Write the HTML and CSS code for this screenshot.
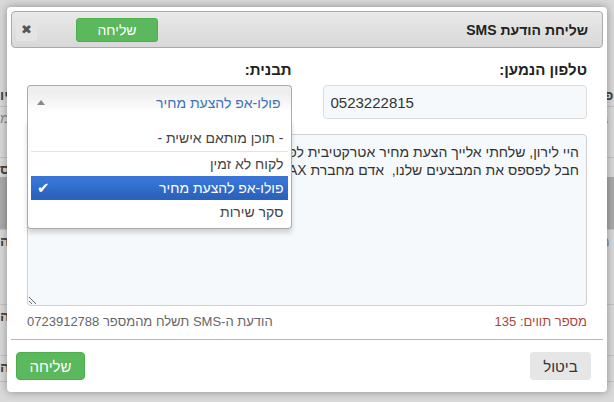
FILE: index.html
```html
<!DOCTYPE html>
<html lang="he" dir="rtl">
<head>
  <meta charset="UTF-8" />
  <title>שליחת הודעת SMS</title>
  <link rel="stylesheet" href="styles.css">
</head>
<body>
  <div class="backdrop">
    <div class="bg-row bg-head"><span class="bg-right">פו</span><span class="bg-left">יו</span></div>
    <div class="bg-row bg-tall"><span class="bg-right muted">ב</span><span class="bg-left muted">מ</span></div>
    <div class="bg-row bg-block"><span class="bg-right"></span><span class="bg-left">ס</span></div>
    <div class="bg-row bg-tall2"><span class="bg-right muted">מ</span><span class="bg-left">ה</span></div>
    <div class="bg-row bg-tall"><span class="bg-right"></span><span class="bg-left">ה</span></div>
    <div class="bg-row"><span class="bg-right"></span><span class="bg-left">ה</span></div>
  </div>

  <div class="dialog">
    <div class="titlebar">
      <span class="title">שליחת הודעת SMS</span>
      <div class="title-actions">
        <button class="btn btn-green btn-small">שליחה</button>
        <button class="close-btn" aria-label="סגירה">&#10006;</button>
      </div>
    </div>

    <div class="dialog-body">
      <div class="fields">
        <div class="field">
          <label for="phone">טלפון הנמען:</label>
          <input type="text" id="phone" class="text-input" value="0523222815" dir="ltr">
        </div>
        <div class="field">
          <label>תבנית:</label>
          <div class="chosen">
            <div class="chosen-single">
              <span>פולו-אפ להצעת מחיר</span>
              <b class="arrow"></b>
            </div>
            <div class="chosen-drop">
              <ul class="chosen-results">
                <li class="sep">- תוכן מותאם אישית -</li>
                <li>לקוח לא זמין</li>
                <li class="highlighted"><span>פולו-אפ להצעת מחיר</span><span class="check">&#10004;</span></li>
                <li>סקר שירות</li>
              </ul>
            </div>
          </div>
        </div>
      </div>

      <textarea class="message">היי לירון, שלחתי אלייך הצעת מחיר אטרקטיבית לפני כמה ימים, אשמח לשמוע ממך.
חבל לפספס את המבצעים שלנו,  אדם מחברת MAX</textarea>

      <div class="meta">
        <span class="count">מספר תווים: 135</span>
        <span class="sender">הודעת ה-SMS תשלח מהמספר 0723912788</span>
      </div>
    </div>

    <div class="dialog-footer">
      <button class="btn btn-grey">ביטול</button>
      <button class="btn btn-green">שליחה</button>
    </div>
  </div>
</body>
</html>
```

FILE: styles.css
```css
* {
  box-sizing: border-box;
  margin: 0;
  padding: 0;
}

body {
  font-family: "Liberation Sans", Arial, sans-serif;
  font-size: 14px;
  color: #333;
  background-color: #d9d9d9;
  height: 402px;
  overflow: hidden;
}

/* page behind the dialog */
.backdrop {
  padding-top: 84px;
}

.bg-row {
  display: flex;
  justify-content: space-between;
  align-items: flex-start;
  height: 26px;
  border-bottom: 1px solid #c2c2c2;
  padding-top: 3px;
  font-weight: bold;
  color: #444;
}

.bg-row .muted {
  font-weight: normal;
  color: #8a8a8a;
}

.bg-right,
.bg-left {
  width: 14px;
  overflow: hidden;
  white-space: nowrap;
}

.bg-right {
  text-align: left;
}

.bg-left {
  text-align: left;
}

.bg-head {
  height: 23px;
}

.bg-tall {
  height: 51px;
}

.bg-block {
  height: 72px;
  background: linear-gradient(to bottom, transparent 19px, #aaa 19px, #aaa 71px, transparent 71px);
}

.bg-tall2 {
  height: 75px;
}

/* dialog */
.dialog {
  position: absolute;
  top: 7px;
  left: 7px;
  width: 600px;
  height: 385px;
  background: #fff;
  border-radius: 4px;
  padding: 4px;
  box-shadow: 0 0 8px rgba(0,0,0,0.35);
  display: flex;
  flex-direction: column;
}

.titlebar {
  height: 37px;
  border: 1px solid #aaa;
  border-radius: 4px;
  background: linear-gradient(#e9e9e9, #d8d8d8);
  display: flex;
  align-items: center;
  justify-content: space-between;
  padding: 0 14px 0 4px;
}

.title {
  font-weight: bold;
  font-size: 14px;
  color: #222;
}

.title-actions {
  display: flex;
  align-items: center;
  gap: 39px;
}

.close-btn {
  width: 21px;
  height: 23px;
  border: none;
  border-radius: 3px;
  background: #e4e4e4;
  color: #555;
  font-size: 13px;
  font-family: "DejaVu Sans", sans-serif;
  cursor: pointer;
}

.btn {
  font-family: "Liberation Sans", Arial, sans-serif;
  font-size: 15px;
  height: 28px;
  border-radius: 4px;
  border: 1px solid transparent;
  cursor: pointer;
}

.btn-green {
  background-color: #5cb85c;
  border-color: #4cae4c;
  color: #fff;
  width: 69px;
}

.btn-small {
  width: 82px;
  height: 24px;
  font-size: 14px;
  border-radius: 3px;
}

.btn-grey {
  background-color: #e6e6e6;
  color: #333;
  width: 61px;
}

.dialog-body {
  padding: 12px 16px 0;
}

.fields {
  display: grid;
  grid-template-columns: 1fr 1fr;
  gap: 31px;
}

.field label {
  display: block;
  font-weight: bold;
  font-size: 15px;
  line-height: 20px;
  margin-bottom: 5px;
  color: #222;
}

.text-input {
  width: 100%;
  height: 34px;
  border: 1px solid #dcdcdc;
  border-radius: 4px;
  background: #f5f9fc;
  padding: 0 7px;
  font-family: "Liberation Sans", Arial, sans-serif;
  font-size: 15px;
  color: #333;
  text-align: left;
}

/* chosen-like dropdown */
.chosen {
  position: relative;
  height: 34px;
}

.chosen-single {
  height: 34px;
  border: 1px solid #aaa;
  border-bottom: none;
  border-radius: 4px 4px 0 0;
  background: linear-gradient(#eee 20%, #fff 80%);
  display: flex;
  align-items: center;
  justify-content: space-between;
  padding: 0 10px 0 9px;
  color: #3a74b8;
  font-size: 14px;
}

.arrow {
  width: 0;
  height: 0;
  border-left: 4px solid transparent;
  border-right: 4px solid transparent;
  border-bottom: 5px solid #888;
}

.chosen-drop {
  position: absolute;
  top: 34px;
  left: 0;
  right: 0;
  z-index: 10;
  background: #fff;
  border: 1px solid #aaa;
  border-top: none;
  border-radius: 0 0 4px 4px;
  box-shadow: 0 4px 5px rgba(0,0,0,0.15);
  padding: 7px 3px 4px;
}

.chosen-results {
  list-style: none;
}

.chosen-results li {
  height: 24px;
  line-height: 24px;
  padding: 0 4px 0 6px;
  color: #444;
  display: flex;
  justify-content: space-between;
}

.chosen-results li.sep {
  height: 26px;
  border-bottom: 1px solid #e4e4e4;
}

.chosen-results li.highlighted {
  background: linear-gradient(#3875d7 20%, #2a62bc 90%);
  color: #fff;
}

.check {
  font-family: "DejaVu Sans", sans-serif;
  font-size: 15px;
}

.message {
  display: block;
  width: 100%;
  height: 172px;
  margin-top: 15px;
  border: 1px solid #d0d0d0;
  border-radius: 4px;
  background: #f5f9fc;
  padding: 8px 7px;
  font-family: "Liberation Sans", Arial, sans-serif;
  font-size: 14px;
  line-height: 18px;
  color: #333;
  resize: vertical;
}

.meta {
  display: flex;
  justify-content: space-between;
  line-height: 18px;
  margin-top: 7px;
  font-size: 13px;
}

.count {
  color: #a94442;
}

.sender {
  color: #666;
}

.dialog-footer {
  margin-top: 8px;
  border-top: 1px solid #bbb;
  padding: 12px 12px 0 5px;
  display: flex;
  justify-content: space-between;
}
```
